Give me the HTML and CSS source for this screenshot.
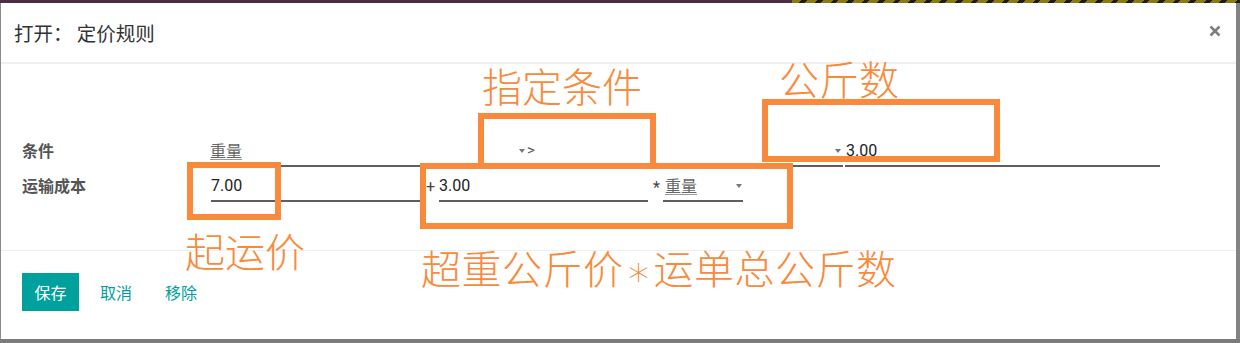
FILE: index.html
```html
<!DOCTYPE html>
<html lang="zh">
<head>
<meta charset="utf-8">
<title>打开： 定价规则</title>
<link rel="stylesheet" href="styles.css">
</head>
<body>
<div class="page">
  <div class="topbar"><div class="tb-purple"></div><div class="tb-stripes"></div></div>
  <div class="stage">
    <div class="modal">
      <header class="m-header">
        <h4 class="m-title">打开： 定价规则</h4>
        <button class="m-close" aria-label="close">
          <svg width="12" height="12" viewBox="0 0 12 12"><path d="M1.5 1.5 L10.5 10.5 M10.5 1.5 L1.5 10.5" stroke="#7f7f7f" stroke-width="2.6" stroke-linecap="butt"/></svg>
        </button>
      </header>
      <section class="m-body">
        <div class="row">
          <div class="label">条件</div>
          <div class="fields">
            <div class="field f-var"><span class="link-text">重量</span><span class="caret"></span></div>
            <div class="field f-op"><span class="op">&gt;</span><span class="caret"></span></div>
            <div class="field f-val"><span class="num">3.00</span></div>
          </div>
        </div>
        <div class="row">
          <div class="label">运输成本</div>
          <div class="fields">
            <div class="field f-base"><span class="num">7.00</span></div>
            <span class="sym plus">+</span>
            <div class="field f-extra"><span class="num">3.00</span></div>
            <span class="sym star">*</span>
            <div class="field f-unit"><span class="link-text">重量</span><span class="caret"></span></div>
          </div>
        </div>
      </section>
      <footer class="m-footer">
        <button class="btn btn-primary">保存</button>
        <button class="btn btn-link">取消</button>
        <button class="btn btn-link">移除</button>
      </footer>
    </div>
    <div class="edge-right"></div>
  </div>

  <div class="annot box b1"></div>
  <div class="annot box b2"></div>
  <div class="annot box b3"></div>
  <div class="annot box b4"></div>
  <div class="annot note n1">指定条件</div>
  <div class="annot note n2">公斤数</div>
  <div class="annot note n3">起运价</div>
  <div class="annot note n4">超重公斤价<span class="ast">∗</span>运单总公斤数</div>
</div>
</body>
</html>
```
FILE: styles.css
```css
* { box-sizing: border-box; }
html, body { margin: 0; padding: 0; }
body {
  width: 1240px;
  height: 343px;
  overflow: hidden;
  background: #7b7b7b;
  font-family: Roboto, "Noto Sans CJK SC", sans-serif;
}
.page { position: relative; width: 1240px; height: 343px; }

.topbar { display: flex; height: 3px; }
.tb-purple { width: 792px; background: #4a2e48; }
.tb-stripes {
  flex: 1;
  background: repeating-linear-gradient(135deg, #8a7a12 0 7px, #1c1c1c 7px 11px);
}

.stage { display: flex; height: 336px; }
.modal {
  width: 1236px;
  height: 336px;
  background: #fff;
  border-left: 1px solid #8a8a8a;
  display: flex;
  flex-direction: column;
}
.edge-right { flex: 1; background: #838383; }

.m-header {
  height: 61px;
  border-bottom: 2px solid #efefef;
  display: flex;
  align-items: center;
  justify-content: space-between;
  padding: 0 15px 0 13px;
}
.m-title {
  margin: 0;
  font-size: 19.5px;
  font-weight: 400;
  color: #333;
  font-family: "Noto Sans CJK SC", sans-serif;
}
.m-close {
  border: 0;
  background: transparent;
  padding: 0;
  width: 12px;
  height: 12px;
  display: flex;
  margin-top: -3px;
}

.m-body {
  height: 186px;
  padding-top: 72px;
  display: flex;
  flex-direction: column;
  gap: 4px;
}
.row { display: flex; align-items: center; height: 31px; }
.label {
  width: 209px;
  padding-left: 21px;
  font-family: "Noto Sans CJK SC", sans-serif;
  font-size: 16px;
  font-weight: 700;
  color: #555;
  margin-top: -3px;
}
.fields { display: flex; align-items: stretch; height: 31px; }
.field {
  display: flex;
  align-items: center;
  justify-content: space-between;
  height: 31px;
  border-bottom: 2px solid #5e5e5e;
  font-size: 16px;
  line-height: 29px;
  color: #222;
}
.link-text {
  font-family: "Noto Sans CJK SC", sans-serif;
  color: #666;
  text-decoration: underline;
  text-decoration-color: #999;
  text-underline-offset: 2px;
  font-size: 16px;
}
.caret {
  width: 0; height: 0;
  border-left: 3px solid transparent;
  border-right: 3px solid transparent;
  border-top: 4px solid #777;
  margin-right: 2px;
}
.op { color: #555; font-size: 15px; }
.num { color: #222; }

.f-var { width: 317px; }
.f-op { width: 316px; padding-left: 0; }
.f-val { width: 315px; margin-left: 2px; padding-left: 1px; }

.f-base { width: 210px; margin-left: 1px; }
.sym { font-size: 16px; color: #444; line-height: 31px; height: 31px; }
.plus { margin-left: 5px; width: 13px; }
.f-extra { width: 209px; }
.star { margin-left: 5px; width: 10px; padding-top: 1px; }
.f-unit { width: 80px; padding-left: 2px; }
.f-unit .caret { margin-right: 1px; }

.m-footer {
  flex: 1;
  border-top: 1px solid #eeeeee;
  padding: 22px 0 0 21px;
  display: flex;
  align-items: flex-start;
}
.btn {
  height: 38px;
  border: 0;
  font-family: "Noto Sans CJK SC", sans-serif;
  font-size: 16px;
  cursor: pointer;
}
.btn-primary {
  width: 57px;
  padding: 0;
  background: #00a09d;
  color: #fff;
  margin-right: 5px;
}
.btn-link {
  background: transparent;
  color: #00a09d;
  padding: 0 16px;
  margin-right: 1px;
}

/* annotation overlay drawn on top of the screenshot */
.annot { position: absolute; }
.box { border: 6px solid #f98a3b; }
.b1 { left: 187px; top: 162px; width: 94px; height: 58px; }
.b2 { left: 478px; top: 113px; width: 178px; height: 56px; }
.b3 { left: 420px; top: 163px; width: 373px; height: 66px; }
.b4 { left: 762px; top: 99px; width: 238px; height: 63px; }
.note {
  color: #f98a3b;
  font-family: "Noto Sans CJK SC", sans-serif;
  font-weight: 300;
  font-size: 40px;
  line-height: 1;
  white-space: nowrap;
}
.n1 { left: 482px; top: 65px; }
.n2 { left: 779px; top: 58px; }
.n3 { left: 185px; top: 230px; }
.n4 { left: 421px; top: 247px; letter-spacing: 0.5px; }
.ast {
  display: inline-block;
  width: 30px;
  text-align: center;
  font-family: "DejaVu Sans", sans-serif;
  font-size: 42px;
  line-height: 0;
  letter-spacing: 0;
  vertical-align: -2px;
}
```
